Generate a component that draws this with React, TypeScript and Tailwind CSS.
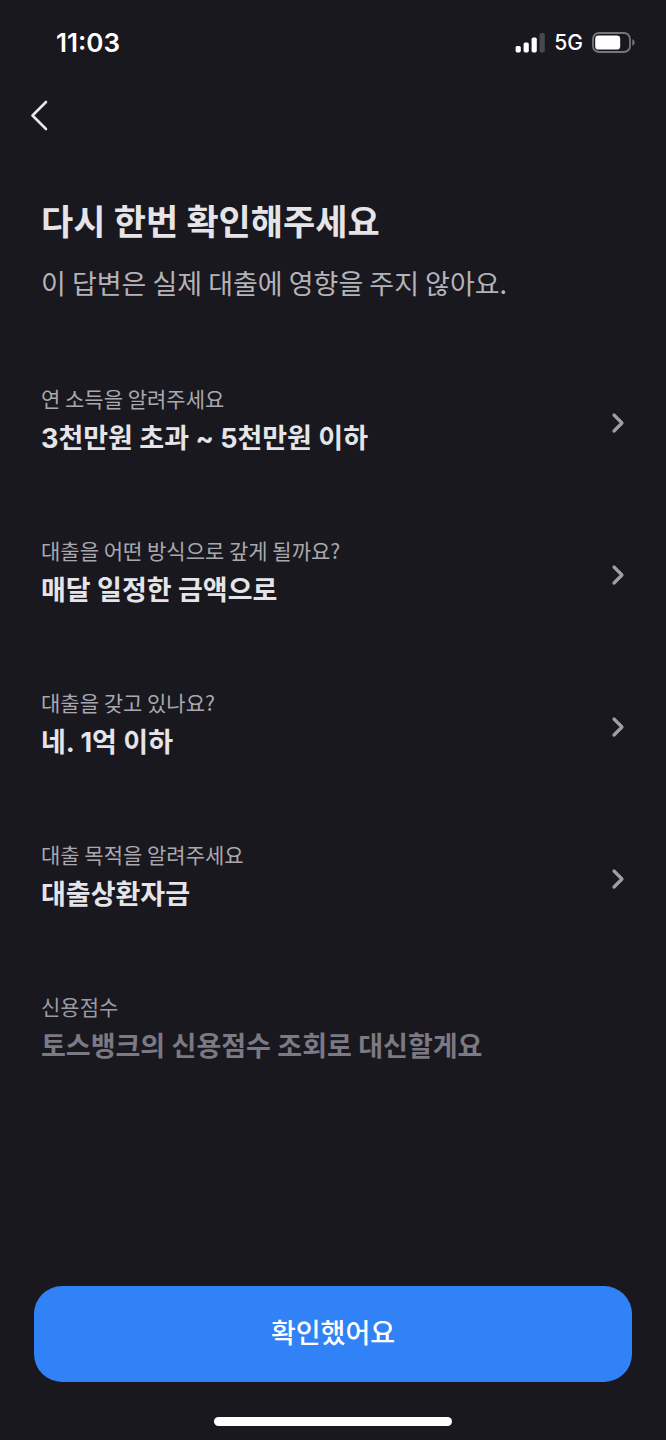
type Answer = {
  question: string;
  value: string;
};

const answers: Answer[] = [
  { question: '연 소득을 알려주세요', value: '3천만원 초과 ~ 5천만원 이하' },
  { question: '대출을 어떤 방식으로 갚게 될까요?', value: '매달 일정한 금액으로' },
  { question: '대출을 갖고 있나요?', value: '네. 1억 이하' },
  { question: '대출 목적을 알려주세요', value: '대출상환자금' },
];

export default function App() {
  return (
    <div className="flex min-h-screen flex-col bg-[#19181e] font-['Inter','Noto_Sans_CJK_KR',sans-serif] text-[#e5e5e9]">
      <StatusBar />

      <nav className="flex h-15 items-center px-5">
        <button type="button" aria-label="뒤로" className="flex size-10 items-center justify-center">
          <svg viewBox="0 0 40 40" className="size-10" fill="none" stroke="#e8e8ea" strokeWidth="2.6" strokeLinecap="round" strokeLinejoin="round">
            <path d="M26 7 12.5 20.5 26 34" />
          </svg>
        </button>
      </nav>

      <main className="flex flex-1 flex-col">
        <header className="px-[41px] pt-13">
          <h1 className="text-[35px] leading-[50px] font-bold">다시 한번 확인해주세요</h1>
          <p className="mt-4 font-['Noto_Sans_CJK_KR',sans-serif] text-[27px] leading-[40px] text-[#b4b3ba]">
            이 답변은 실제 대출에 영향을 주지 않아요.
          </p>
        </header>

        <ul className="mt-[43px]">
          {answers.map((answer) => (
            <li key={answer.question}>
              <button type="button" className="flex w-full items-center justify-between px-[41px] py-[37px] text-left">
                <AnswerText {...answer} />
                <ChevronRight />
              </button>
            </li>
          ))}
          <li className="px-[41px] py-[37px]">
            <AnswerText question="신용점수" value="토스뱅크의 신용점수 조회로 대신할게요" disabled />
          </li>
        </ul>
      </main>

      <footer className="px-[34px] pb-[14px]">
        <button type="button" className="h-24 w-full rounded-[28px] bg-[#3182f7] text-[27px] font-medium text-white">
          확인했어요
        </button>
        <div className="mx-auto mt-[35px] h-[9px] w-[238px] rounded-full bg-white" />
      </footer>
    </div>
  );
}

function AnswerText({ question, value, disabled = false }: Answer & { disabled?: boolean }) {
  return (
    <span className="flex flex-col gap-1">
      <span className={`font-['Noto_Sans_CJK_KR',sans-serif] text-[21px] leading-[30px] ${disabled ? 'text-[#9c9ba2]' : 'text-[#a9a8af]'}`}>
        {question}
      </span>
      <span className={`text-[27px] leading-[44px] font-bold ${disabled ? 'text-[#7b7983]' : ''}`}>{value}</span>
    </span>
  );
}

function ChevronRight() {
  return (
    <svg viewBox="0 0 20 24" className="h-6 w-5 shrink-0" fill="none" stroke="#9f9ea5" strokeWidth="3.2" strokeLinecap="round" strokeLinejoin="round">
      <path d="M9 5 17 13 9 21" />
    </svg>
  );
}

function StatusBar() {
  return (
    <div className="flex h-[85px] items-center justify-between pr-[31px] pl-14">
      <span className="text-[26px] leading-[32px] font-semibold text-white">11:03</span>
      <div className="flex items-center gap-[9px]">
        <svg viewBox="0 0 30 20" className="h-5 w-[30px]" fill="#fff">
          <rect x="0.6" y="13" width="5.2" height="6.4" rx="1.6" />
          <rect x="8.6" y="9.5" width="5.2" height="9.9" rx="1.6" />
          <rect x="16.6" y="4.6" width="5.2" height="14.8" rx="1.6" />
          <rect x="24.6" y="0" width="5.2" height="19.4" rx="1.6" fill="#49484e" />
        </svg>
        <span className="text-[21px] leading-[32px] font-medium text-white">5G</span>
        <svg viewBox="0 0 43 21" className="h-[21px] w-[43px]" fill="none">
          <rect x="1" y="1" width="37" height="19" rx="6" stroke="#77767c" strokeWidth="1.8" />
          <rect x="3.2" y="3.4" width="25" height="14.2" rx="3.4" fill="#fff" />
          <path d="M40.3 7.2c1.6.5 2.3 1.8 2.3 3.3s-.7 2.8-2.3 3.3Z" fill="#77767c" />
        </svg>
      </div>
    </div>
  );
}
